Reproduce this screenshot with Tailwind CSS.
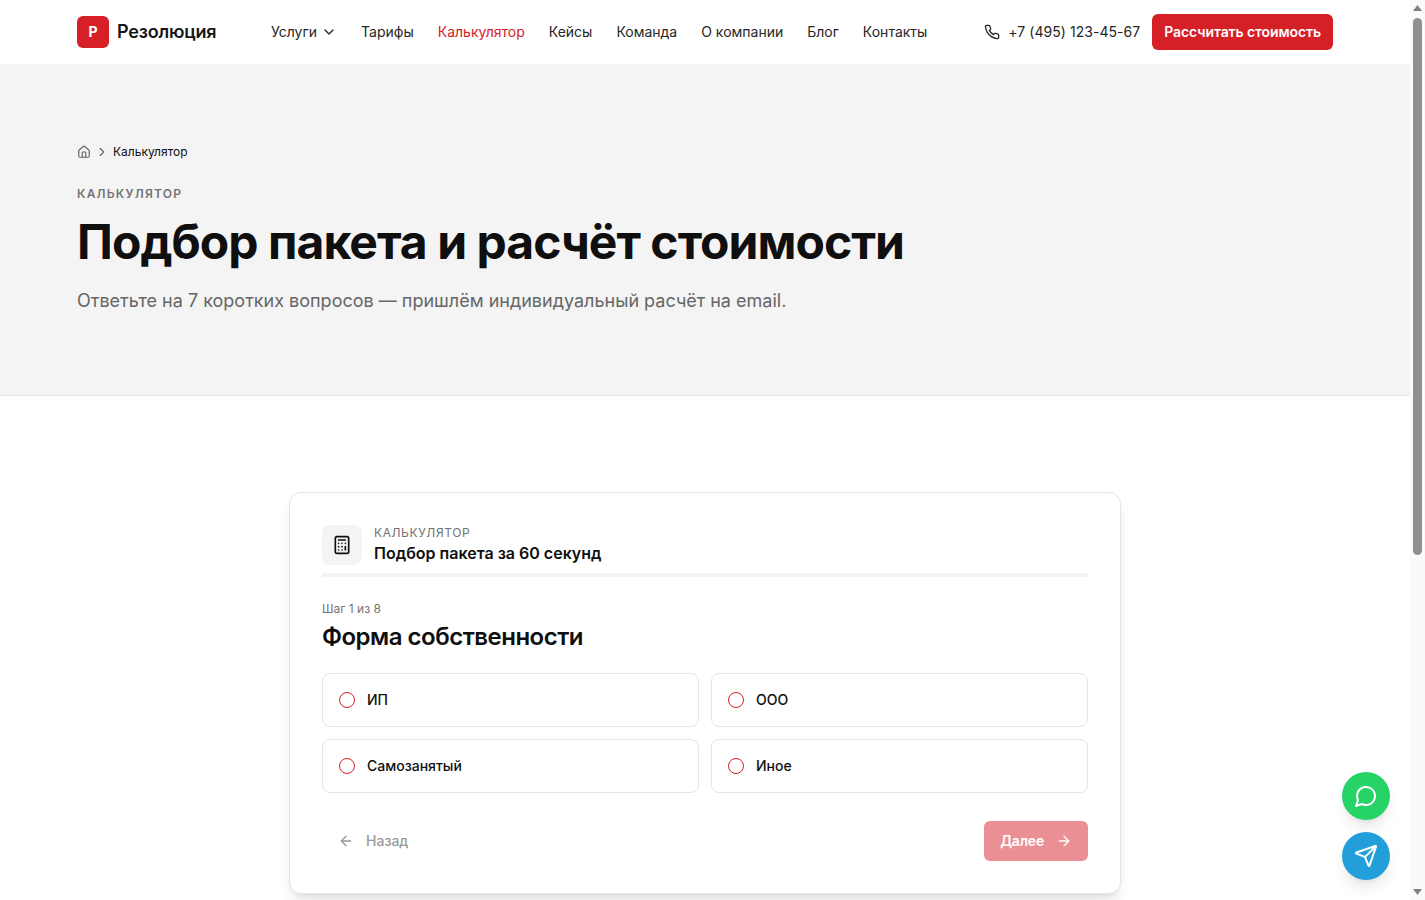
<!DOCTYPE html>
<html lang="ru">
<head>
  <meta charset="UTF-8" />
  <meta name="viewport" content="width=device-width, initial-scale=1" />
  <title>Калькулятор - Резолюция</title>
  <script src="https://cdn.jsdelivr.net/npm/@tailwindcss/browser@4"></script>
</head>
<body class="bg-white font-[Inter,sans-serif] text-[#0f0f0f] mr-[15px]">

  <!-- header -->
  <header class="h-16 bg-white">
    <div class="w-[1256px] h-16 mx-auto flex items-center">
      <a href="#" class="flex items-center gap-2 w-[194px]">
        <span class="w-8 h-8 rounded-md bg-[#d62027] text-white text-sm font-bold flex items-center justify-center">Р</span>
        <span class="text-lg font-semibold tracking-[-0.2px] text-[#171717]">Резолюция</span>
      </a>
      <nav class="flex items-center gap-6 text-sm text-[#262626]">
        <a href="#" class="flex items-center gap-1">Услуги
          <svg class="w-4 h-4" viewBox="0 0 24 24" fill="none" stroke="currentColor" stroke-width="2" stroke-linecap="round" stroke-linejoin="round"><path d="m6 9 6 6 6-6"/></svg>
        </a>
        <a href="#">Тарифы</a>
        <a href="#" class="text-[#d62027]">Калькулятор</a>
        <a href="#">Кейсы</a>
        <a href="#">Команда</a>
        <a href="#">О компании</a>
        <a href="#">Блог</a>
        <a href="#">Контакты</a>
      </nav>
      <div class="ml-auto flex items-center">
        <a href="#" class="flex items-center gap-2 text-sm tracking-[0.05px] text-[#262626]">
          <svg class="w-4 h-4" viewBox="0 0 24 24" fill="none" stroke="currentColor" stroke-width="2" stroke-linecap="round" stroke-linejoin="round"><path d="M22 16.92v3a2 2 0 0 1-2.18 2 19.79 19.79 0 0 1-8.63-3.07 19.5 19.5 0 0 1-6-6 19.79 19.79 0 0 1-3.07-8.67A2 2 0 0 1 4.11 2h3a2 2 0 0 1 2 1.72c.13.96.36 1.9.7 2.81a2 2 0 0 1-.45 2.11L8.09 9.91a16 16 0 0 0 6 6l1.27-1.27a2 2 0 0 1 2.11-.45c.91.34 1.85.57 2.81.7A2 2 0 0 1 22 16.92z"/></svg>
          +7 (495) 123-45-67
        </a>
        <a href="#" class="ml-3 h-9 px-3 rounded-md bg-[#d62027] text-white text-sm font-semibold tracking-[-0.1px] flex items-center">Рассчитать стоимость</a>
      </div>
    </div>
  </header>

  <!-- hero -->
  <section class="h-[332px] bg-[#f4f4f4] border-b border-[#e5e5e5] pt-20">
    <div class="w-[1256px] mx-auto">
      <div class="flex items-center gap-1 text-xs h-4">
        <svg class="w-3.5 h-3.5 text-[#666]" viewBox="0 0 24 24" fill="none" stroke="currentColor" stroke-width="2" stroke-linecap="round" stroke-linejoin="round"><path d="M15 21v-8a1 1 0 0 0-1-1h-4a1 1 0 0 0-1 1v8"/><path d="M3 10a2 2 0 0 1 .709-1.528l7-5.999a2 2 0 0 1 2.582 0l7 5.999A2 2 0 0 1 21 10v9a2 2 0 0 1-2 2H5a2 2 0 0 1-2-2z"/></svg>
        <svg class="w-3.5 h-3.5 text-[#666]" viewBox="0 0 24 24" fill="none" stroke="currentColor" stroke-width="2" stroke-linecap="round" stroke-linejoin="round"><path d="m9 18 6-6-6-6"/></svg>
        <span>Калькулятор</span>
      </div>
      <p class="mt-[26px] text-xs font-semibold tracking-widest text-[#737373]">КАЛЬКУЛЯТОР</p>
      <h1 class="mt-2.5 text-5xl leading-[60px] font-bold tracking-[-0.96px]">Подбор пакета и расчёт стоимости</h1>
      <p class="mt-[15px] text-lg text-[#666]">Ответьте на 7 коротких вопросов — пришлём индивидуальный расчёт на email.</p>
    </div>
  </section>

  <!-- calculator -->
  <main class="pt-24 pb-[556px]">
    <div class="w-[832px] mx-auto bg-white border border-[#e5e5e5] rounded-xl shadow-lg shadow-black/10 p-8">
      <div class="flex items-center gap-3">
        <span class="w-10 h-10 rounded-lg bg-[#f4f4f4] flex items-center justify-center">
          <svg class="w-5 h-5" viewBox="0 0 24 24" fill="none" stroke="currentColor" stroke-width="2" stroke-linecap="round" stroke-linejoin="round"><rect width="16" height="20" x="4" y="2" rx="2"/><line x1="8" x2="16" y1="6" y2="6"/><path d="M16 14v4"/><path d="M16 10h.01"/><path d="M12 10h.01"/><path d="M8 10h.01"/><path d="M12 14h.01"/><path d="M8 14h.01"/><path d="M12 18h.01"/><path d="M8 18h.01"/></svg>
        </span>
        <div>
          <p class="text-xs leading-4 tracking-wider text-[#737373]">КАЛЬКУЛЯТОР</p>
          <p class="text-base leading-6 font-semibold">Подбор пакета за 60 секунд</p>
        </div>
      </div>
      <div class="mt-2 h-1 rounded-full bg-[#f4f4f4]"></div>

      <p class="mt-6 text-xs leading-4 text-[#737373]">Шаг 1 из 8</p>
      <h2 class="mt-1 text-2xl leading-8 font-semibold tracking-[-0.5px]">Форма собственности</h2>

      <div class="mt-5 grid grid-cols-2 gap-3">
        <label class="h-[54px] px-4 flex items-center gap-3 border border-[#e5e5e5] rounded-lg text-sm font-medium">
          <span class="w-4 h-4 rounded-full border-[1.5px] border-[#d62027]"></span>ИП
        </label>
        <label class="h-[54px] px-4 flex items-center gap-3 border border-[#e5e5e5] rounded-lg text-sm font-medium">
          <span class="w-4 h-4 rounded-full border-[1.5px] border-[#d62027]"></span>ООО
        </label>
        <label class="h-[54px] px-4 flex items-center gap-3 border border-[#e5e5e5] rounded-lg text-sm font-medium">
          <span class="w-4 h-4 rounded-full border-[1.5px] border-[#d62027]"></span>Самозанятый
        </label>
        <label class="h-[54px] px-4 flex items-center gap-3 border border-[#e5e5e5] rounded-lg text-sm font-medium">
          <span class="w-4 h-4 rounded-full border-[1.5px] border-[#d62027]"></span>Иное
        </label>
      </div>

      <div class="mt-7 flex items-center justify-between">
        <button class="h-10 px-4 flex items-center gap-3 text-sm font-medium text-[#999]">
          <svg class="w-4 h-4" viewBox="0 0 24 24" fill="none" stroke="currentColor" stroke-width="2" stroke-linecap="round" stroke-linejoin="round"><path d="m12 19-7-7 7-7"/><path d="M19 12H5"/></svg>
          Назад
        </button>
        <button class="h-10 px-4 flex items-center gap-3 rounded-md bg-[#d62027]/50 text-white text-sm font-semibold tracking-[-0.2px]">
          Далее
          <svg class="w-4 h-4" viewBox="0 0 24 24" fill="none" stroke="currentColor" stroke-width="2" stroke-linecap="round" stroke-linejoin="round"><path d="M5 12h14"/><path d="m12 5 7 7-7 7"/></svg>
        </button>
      </div>
    </div>
  </main>

  <!-- floating contact buttons -->
  <div class="fixed right-[35px] bottom-5 flex flex-col gap-3">
    <a href="#" class="w-12 h-12 rounded-full bg-[#25d366] text-white shadow-lg flex items-center justify-center">
      <svg class="w-6 h-6" viewBox="0 0 24 24" fill="none" stroke="currentColor" stroke-width="2" stroke-linecap="round" stroke-linejoin="round"><path d="M7.9 20A9 9 0 1 0 4 16.1L2 22Z"/></svg>
    </a>
    <a href="#" class="w-12 h-12 rounded-full bg-[#229ed9] text-white shadow-lg flex items-center justify-center">
      <svg class="w-6 h-6" viewBox="0 0 24 24" fill="none" stroke="currentColor" stroke-width="2" stroke-linecap="round" stroke-linejoin="round"><path d="M14.536 21.686a.5.5 0 0 0 .937-.024l6.5-19a.496.496 0 0 0-.635-.635l-19 6.5a.5.5 0 0 0-.024.937l7.93 3.18a2 2 0 0 1 1.112 1.11z"/><path d="m21.854 2.147-10.94 10.939"/></svg>
    </a>
  </div>

  <!-- window scrollbar -->
  <div class="fixed top-0 right-0 bottom-0 w-[15px] bg-[#fafafa] flex flex-col items-center pt-[5px] pb-[5px]">
    <svg class="w-[9px] h-[6px] shrink-0" viewBox="0 0 9 6"><path d="M4.5 0 9 6H0z" fill="#808080"/></svg>
    <div class="w-[9px] h-[537px] mt-[7px] rounded-[5px] bg-[#8f8f8f]"></div>
    <svg class="w-[9px] h-[6px] shrink-0 mt-auto" viewBox="0 0 9 6"><path d="M4.5 6 9 0H0z" fill="#808080"/></svg>
  </div>

</body>
</html>
